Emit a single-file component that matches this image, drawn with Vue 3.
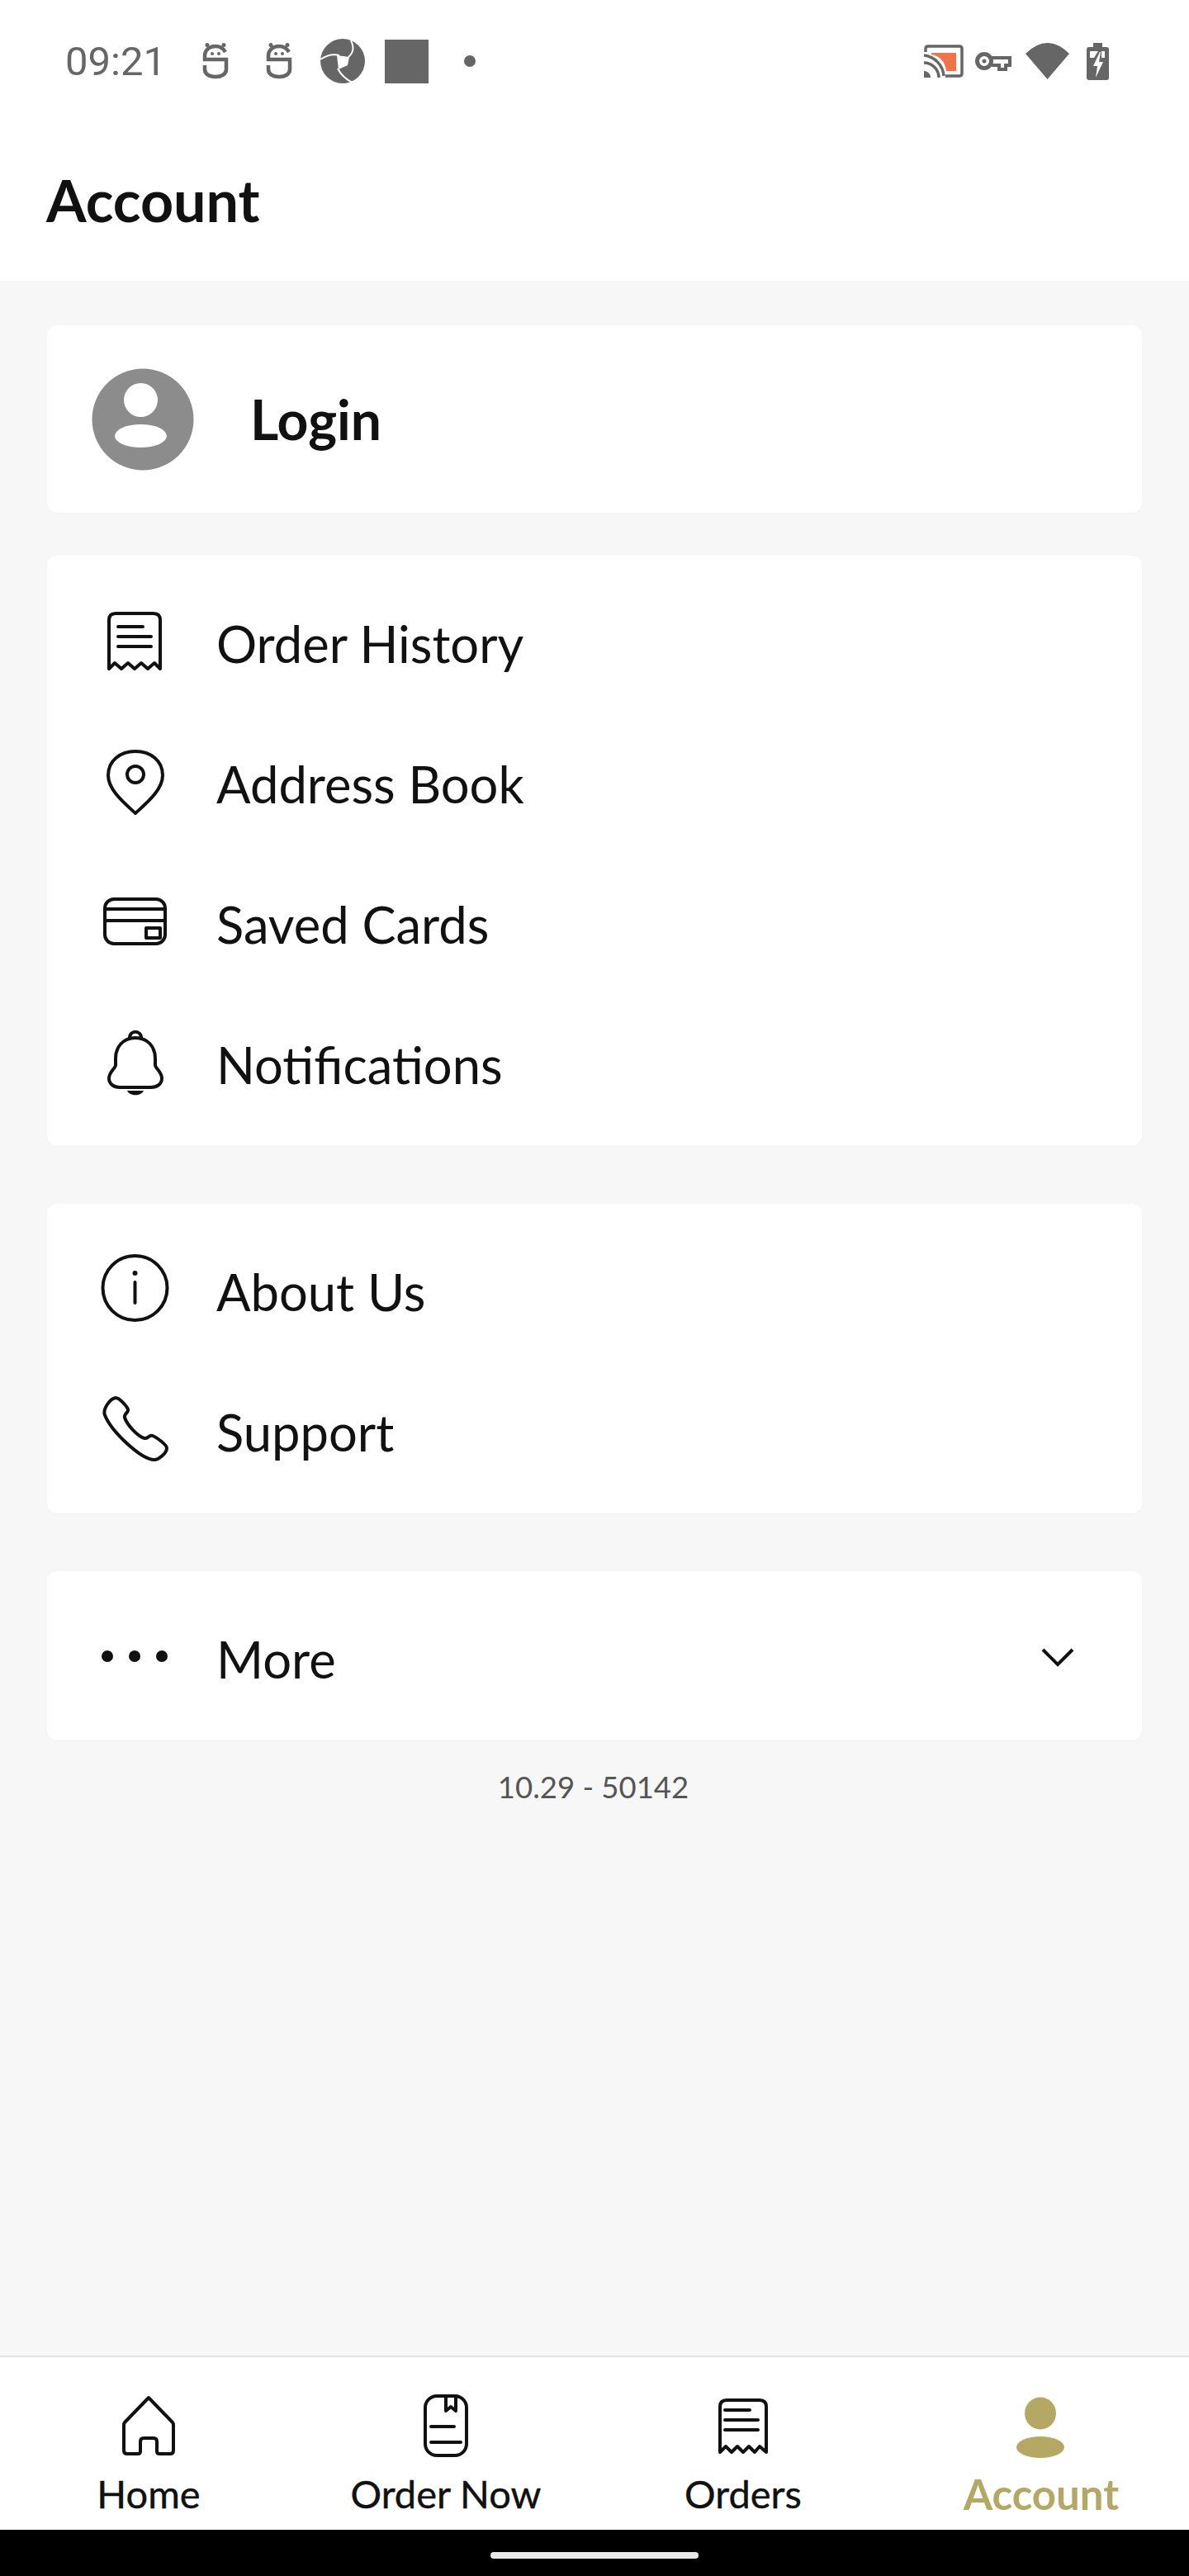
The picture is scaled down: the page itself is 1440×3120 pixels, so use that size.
<template>
  <div class="phone">
    <div class="top">
      <div class="status">
        <span class="time">09:21</span>
        <svg class="robot" width="32" height="44" viewBox="0 0 32 44">
          <circle cx="6" cy="2.5" r="2.5" fill="#666" />
          <circle cx="26" cy="2.5" r="2.5" fill="#666" />
          <circle cx="12" cy="13" r="2" fill="#666" />
          <circle cx="20" cy="13" r="2" fill="#666" />
          <path d="M28 11C25 6 21 4 16 4 9 4 3 8 3 16V20H29V32C29 38 23 41 16 41 9 41 3 38 3 32V27" fill="none" stroke="#666" stroke-width="4.5" />
        </svg>
        <svg class="robot second" width="32" height="44" viewBox="0 0 32 44">
          <circle cx="6" cy="2.5" r="2.5" fill="#666" />
          <circle cx="26" cy="2.5" r="2.5" fill="#666" />
          <circle cx="12" cy="13" r="2" fill="#666" />
          <circle cx="20" cy="13" r="2" fill="#666" />
          <path d="M28 11C25 6 21 4 16 4 9 4 3 8 3 16V20H29V32C29 38 23 41 16 41 9 41 3 38 3 32V27" fill="none" stroke="#666" stroke-width="4.5" />
        </svg>
        <svg class="shutter" width="54" height="54" viewBox="0 0 54 54">
          <circle cx="27" cy="27" r="27" fill="#666" />
          <path d="M0 25C7 20 15 18 23 20M37 2C41 10 40 17 34 22M21 36C25 44 32 50 41 54" fill="none" stroke="#fff" stroke-width="2" />
          <path d="M20 20L35 22 33 32 22 37Z" fill="#fff" />
        </svg>
        <span class="square"></span>
        <span class="dot"></span>
        <span class="spacer"></span>
        <svg width="48" height="40" viewBox="0 0 48 40">
          <path d="M9 10H39V32H27C26 22 20 14 9 12Z" fill="#f0734a" />
          <path d="M2 9V5Q2 2 5 2H43Q46 2 46 5V35Q46 38 43 38H26" fill="none" stroke="#666" stroke-width="3.5" />
          <path d="M0 40V32A8 8 0 0 1 8 40Z" fill="#666" />
          <path d="M0 22A18 18 0 0 1 18 40M0 13A27 27 0 0 1 24 38" fill="none" stroke="#666" stroke-width="3.5" />
        </svg>
        <svg class="key" width="44" height="26" viewBox="0 0 44 26">
          <circle cx="11" cy="13" r="8.5" fill="none" stroke="#666" stroke-width="5" />
          <circle cx="11" cy="13" r="2.5" fill="#666" />
          <path d="M20 9H42V18H37V23H29V18H20" fill="none" stroke="#666" stroke-width="4" />
        </svg>
        <svg class="wifi" width="53" height="44" viewBox="0 0 53 44">
          <path d="M26.5 44L0 13Q26.5-13 53 13Z" fill="#666" />
        </svg>
        <svg class="battery" width="27" height="45" viewBox="0 0 27 45">
          <path d="M8 0H19V5H24Q27 5 27 8V42Q27 45 24 45H3Q0 45 0 42V8Q0 5 3 5H8Z" fill="#666" />
          <path d="M4 10H14L9 18H4ZM18 10H22V18H18ZM16 11L8 28H13L11 42 20 23H15L17 11Z" fill="#fff" />
        </svg>
      </div>
      <h1 class="title">Account</h1>
    </div>

    <main class="content">
      <section class="card login">
        <svg width="124" height="124" viewBox="0 0 124 124">
          <circle cx="62" cy="62" r="61.5" fill="#8c8c8c" />
          <circle cx="59.5" cy="38.5" r="20.5" fill="#fff" />
          <ellipse cx="59.5" cy="82" rx="31.5" ry="14" fill="#fff" />
        </svg>
        <span class="login-text">Login</span>
      </section>

      <section class="card list">
        <div class="row">
          <svg class="icon" width="84" height="84" viewBox="0 0 84 84">
            <path d="M11 73V14Q11 6 19 6H65Q73 6 73 14V73L66 66 58 73 50 66 42 73 34 66 26 73 18 66Z" />
            <path d="M22 22H52M22 34H62M22 46H62" />
          </svg>
          <span class="label">Order History</span>
        </div>
        <div class="row">
          <svg class="icon" width="84" height="84" viewBox="0 0 84 84">
            <path d="M43 78C30 66 10 50 10 32 10 14 25 3 43 3 61 3 76 14 76 32 76 50 56 66 43 78Z" />
            <circle cx="43" cy="31" r="10" />
          </svg>
          <span class="label">Address Book</span>
        </div>
        <div class="row">
          <svg class="icon" width="84" height="84" viewBox="0 0 84 84">
            <rect x="6" y="12" width="73" height="54" rx="11" />
            <path d="M6 24H79M6 38H79" />
            <rect x="56" y="47" width="17" height="12" />
          </svg>
          <span class="label">Saved Cards</span>
        </div>
        <div class="row">
          <svg class="icon" width="84" height="84" viewBox="0 0 84 84">
            <path d="M36 11C35 0 51 0 50 11" />
            <path d="M43 10C28 10 19 21 19 35V43C19 47 11 51 11 59 11 66 17 70 24 70H62C69 70 75 66 75 59 75 51 67 47 67 43V35C67 21 58 10 43 10Z" />
            <path class="solid" d="M33 74H53C50 81 36 81 33 74Z" />
          </svg>
          <span class="label">Notifications</span>
        </div>
      </section>

      <section class="card list">
        <div class="row">
          <svg class="icon" width="84" height="84" viewBox="0 0 84 84">
            <circle cx="42.5" cy="38" r="39" />
            <circle class="solid" cx="42.5" cy="20" r="3" />
            <path d="M42.5 31V56" />
          </svg>
          <span class="label">About Us</span>
        </div>
        <div class="row">
          <svg class="icon" width="84" height="84" viewBox="0 0 84 84">
            <path d="M6 22C3 15 12 2 19 1 24 1 33 12 34 15 35 19 29 20 30 25 33 34 46 48 54 50 58 51 60 45 64 47 69 49 81 58 81 62 81 68 71 76 66 76 50 76 14 42 6 22Z" />
          </svg>
          <span class="label">Support</span>
        </div>
      </section>

      <section class="card list">
        <div class="row">
          <svg class="icon" width="84" height="84" viewBox="0 0 84 84">
            <circle class="solid" cx="9" cy="39" r="7" />
            <circle class="solid" cx="42" cy="39" r="7" />
            <circle class="solid" cx="75" cy="39" r="7" />
          </svg>
          <span class="label">More</span>
          <svg class="chevron" width="40" height="26" viewBox="0 0 40 26">
            <path d="M2 4L20 22 38 4" fill="none" stroke="#111" stroke-width="4" />
          </svg>
        </div>
      </section>

      <p class="version">10.29 - 50142</p>
    </main>

    <nav class="tabs">
      <div v-for="tab in tabs" :key="tab.name" class="tab" :class="{ active: tab.active }">
        <svg class="icon" width="84" height="84" viewBox="0 0 84 84">
          <template v-if="tab.name === 'Home'">
            <path d="M42 7L13 37Q12 38 12 41V71Q12 75 16 75H29Q32 75 32 72V60Q32 56 36 56H48Q52 56 52 60V72Q52 75 55 75H68Q72 75 72 71V41Q72 38 71 37Z" />
          </template>
          <template v-else-if="tab.name === 'Order Now'">
            <rect x="17" y="5" width="50" height="72" rx="14" />
            <path d="M42 5V23L48 18 54 23V5M24 42H52M24 61H60" />
          </template>
          <template v-else-if="tab.name === 'Orders'">
            <path d="M14 73V18Q14 10 22 10H62Q70 10 70 18V73L62 66 56 73 49 66 42 73 35 66 28 73 21 66Z" />
            <path d="M20 22H50M20 34H60M20 46H60" />
          </template>
          <template v-else>
            <ellipse class="gold" cx="42" cy="26" rx="19" ry="19.5" />
            <ellipse class="gold" cx="42" cy="67" rx="29" ry="13" />
          </template>
        </svg>
        <span class="tab-label">{{ tab.name }}</span>
      </div>
    </nav>

    <div class="gesture">
      <span class="pill"></span>
    </div>
  </div>
</template>

<script setup>
const tabs = [
  { name: 'Home' },
  { name: 'Order Now' },
  { name: 'Orders' },
  { name: 'Account', active: true }
]
</script>

<style>
html,
body {
  margin: 0;
  background: #f7f7f7;
}
</style>

<style scoped>
.phone {
  width: 1440px;
  height: 3120px;
  display: flex;
  flex-direction: column;
  overflow: hidden;
  background: #f7f7f7;
  color: #111;
  font-family: Lato, "Noto Sans", sans-serif;
}

.top {
  height: 340px;
  background: #fff;
  flex: none;
}

.status {
  height: 54px;
  padding: 47px 97px 0 79px;
  display: flex;
  align-items: center;
}

.time {
  width: 117px;
  font-family: Roboto, sans-serif;
  font-size: 49px;
  color: #666;
}

.robot {
  margin-left: 49px;
}

.robot.second {
  margin-left: 45px;
}

.shutter {
  margin-left: 34px;
}

.square {
  width: 53px;
  height: 53px;
  margin-left: 24px;
  background: #666;
}

.dot {
  width: 14px;
  height: 14px;
  margin-left: 43px;
  border-radius: 50%;
  background: #666;
}

.spacer {
  flex: 1;
}

.key {
  margin-left: 14px;
}

.wifi {
  margin-left: 17px;
}

.battery {
  margin-left: 21px;
}

.title {
  margin: 99px 0 0 56px;
  font-size: 70px;
  line-height: 84px;
  font-weight: 700;
}

.content {
  flex: 1;
  padding: 54px 57px 0 57px;
  display: flex;
  flex-direction: column;
}

.card {
  background: #fff;
  border-radius: 12px;
  box-shadow: 0 1px 2px rgba(0, 0, 0, 0.03);
}

.login {
  height: 227px;
  padding-left: 54px;
  display: flex;
  align-items: center;
  margin-bottom: 52px;
}

.login-text {
  margin-left: 68px;
  font-size: 66px;
  font-weight: 700;
}

.list {
  padding: 21px 0 14px;
  margin-bottom: 70px;
}

.list:nth-of-type(4) {
  margin-bottom: 0;
}

.row {
  height: 170px;
  display: flex;
  align-items: center;
  padding-left: 64px;
}

.icon {
  flex: none;
  overflow: visible;
  fill: none;
  stroke: #111;
  stroke-width: 4;
  stroke-linejoin: round;
  stroke-linecap: round;
}

.icon .solid {
  fill: #111;
  stroke: none;
}

.icon .gold {
  fill: #b5a764;
  stroke: none;
}

.label {
  margin-left: 57px;
  font-size: 61.5px;
}

.chevron {
  margin-left: auto;
  margin-right: 82px;
  margin-top: -4px;
}

.version {
  margin: 33px 3px 0 0;
  text-align: center;
  font-size: 36.5px;
  line-height: 46px;
  color: #555;
}

.tabs {
  flex: none;
  height: 211px;
  border-top: 2px solid #e6e6e6;
  background: #fff;
  display: grid;
  grid-template-columns: repeat(4, 1fr);
  box-sizing: border-box;
}

.tab {
  display: flex;
  flex-direction: column;
  align-items: center;
  padding-top: 42px;
}

.tab-label {
  margin-top: 9px;
  font-size: 47px;
  line-height: 60px;
  -webkit-text-stroke: 0.4px #111;
}

.tab.active .tab-label {
  margin-top: 10px;
  margin-left: 2px;
  color: #b5a764;
  font-size: 51px;
  font-weight: 700;
  -webkit-text-stroke: 0;
}

.gesture {
  flex: none;
  height: 56px;
  background: #000;
  display: flex;
  justify-content: center;
}

.pill {
  width: 252px;
  height: 8px;
  margin: 27px 0 0 -1px;
  border-radius: 4px;
  background: #e8e8e8;
}
</style>
